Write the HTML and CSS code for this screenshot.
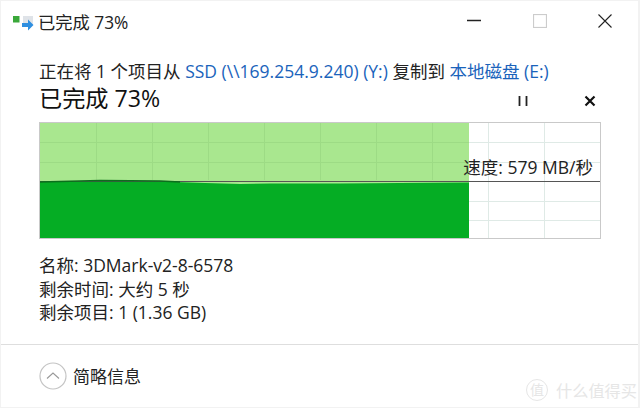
FILE: index.html
```html
<!DOCTYPE html>
<html lang="zh-CN">
<head>
    <title>已完成 73%</title>
    <link rel="stylesheet" href="styles.css">
</head>
<body>
    <div class="window">
        <div class="titlebar">
            <svg class="app-icon" width="26" height="22" viewBox="0 0 26 22">
                <rect x="1" y="6" width="6.500" height="6.500" fill="#3aa83a"/>
                <rect x="11" y="6" width="10" height="9" fill="#dfe3e8"/>
                <path d="M10 13h6V9.500l5.500 5.500-5.500 5.500V17h-6z" fill="#2f8fe0"/>
            </svg>
            <span class="title-text">已完成 73%</span>
            <div class="window-buttons">
                <svg width="14" height="14" viewBox="0 0 14 14"><path d="M0 6.500h14" stroke="#222" stroke-width="1.500"/></svg>
                <svg width="14" height="14" viewBox="0 0 14 14"><rect x="0.500" y="0.500" width="13" height="13" fill="none" stroke="#ccc" stroke-width="1.200"/></svg>
                <svg width="14" height="14" viewBox="0 0 14 14"><path d="M0.500 0.500l13 13M13.500 0.500l-13 13" stroke="#222" stroke-width="1.100"/></svg>
            </div>
        </div>

        <div class="content">
            <p class="copy-line">正在将 1 个项目从 <span class="link">SSD (\\169.254.9.240) (Y:)</span> 复制到 <span class="link">本地磁盘 (E:)</span></p>
            <div class="status-row">
                <h1>已完成 73%</h1>
                <div class="status-buttons">
                    <svg width="12" height="12" viewBox="0 0 12 12"><path d="M2.500 1v10M9.500 1v10" stroke="#222" stroke-width="1.800"/></svg>
                    <svg width="12" height="12" viewBox="0 0 12 12"><path d="M1.500 1.500l9 9M10.500 1.500l-9 9" stroke="#111" stroke-width="2.200"/></svg>
                </div>
            </div>

            <div class="chart">
                <svg width="560" height="115" viewBox="0 0 560 115">
                    <rect x="0" y="0" width="429" height="115" fill="#a9e78f"/>
                    <g stroke="#dfeae6" stroke-width="1">
                        <path d="M448.500 0v115M504.500 0v115"/>
                        <path d="M429 19.500h131M429 39.500h131M429 78.500h131M429 97.500h131"/>
                    </g>
                    <g stroke="#9ddb85" stroke-width="1">
                        <path d="M56.500 0v57M112.500 0v57M168.500 0v57M224.500 0v57M280.500 0v57M336.500 0v57M392.500 0v57"/>
                        <path d="M0 19.500h429M0 39.500h429"/>
                    </g>
                    <path d="M0 59 L60 58 L120 58.500 L165 60 L200 61 L230 60.500 L300 60.500 L360 60 L429 59.500 V115 H0 Z" fill="#05ad24"/>
                    <path d="M0 58.500H560" stroke="#555" stroke-width="1.200"/>
                    <path d="M0 59 L60 57.500 L120 58 L140 59" stroke="#0b6f1c" stroke-width="1.500" fill="none"/>
                </svg>
                <span class="speed">速度: 579 MB/秒</span>
            </div>

            <div class="details">
                <div>名称: 3DMark-v2-8-6578</div>
                <div>剩余时间: 大约 5 秒</div>
                <div>剩余项目: 1 (1.36 GB)</div>
            </div>
        </div>

        <div class="footer">
            <svg width="28" height="28" viewBox="0 0 28 28">
                <circle cx="14" cy="14" r="13" fill="none" stroke="#c4c4c4" stroke-width="1.200"/>
                <path d="M8 16.500l6-5.500 6 5.500" fill="none" stroke="#999" stroke-width="1.100"/>
            </svg>
            <span class="footer-text">简略信息</span>
        </div>

        <div class="watermark"><span class="watermark-logo">值</span><span>什么值得买</span></div>
    </div>
</body>
</html>
```

FILE: styles.css
```css
html, body {
    margin: 0;
    padding: 0;
}

body {
    width: 640px;
    height: 408px;
    overflow: hidden;
    background-color: #f2f2f2;
    font-family: "Open Sans", "Noto Sans CJK SC", sans-serif;
    color: #222;
}

.window {
    position: relative;
    box-sizing: border-box;
    width: 637px;
    height: 406px;
    margin-left: 1px;
    margin-top: 1px;
    background-color: #fff;
    display: flex;
    flex-direction: column;
}

.titlebar {
    height: 40px;
    display: flex;
    align-items: center;
    padding-left: 11px;
    flex-shrink: 0;
}

.title-text {
    font-size: 17.300px;
}

.window-buttons {
    margin-left: auto;
    margin-right: 26px;
    display: flex;
    gap: 51.500px;
    align-items: center;
}

.content {
    padding: 20px 36px 0 38px;
    flex: 1;
}

.copy-line {
    margin: 0;
    font-size: 17.500px;
    line-height: 20px;
    white-space: nowrap;
}

.link {
    color: #1a63bb;
}

.status-row {
    display: flex;
    align-items: center;
    height: 32px;
}

h1 {
    margin: 0;
    font-size: 23.200px;
    font-weight: normal;
    color: #111;
}

.status-buttons {
    margin-left: auto;
    margin-right: 6px;
    margin-top: 8px;
    display: flex;
    gap: 55px;
}

.chart {
    position: relative;
    width: 560px;
    height: 115px;
    margin-top: 9px;
    border: 1px solid #c9c9c9;
}

.chart svg {
    display: block;
}

.speed {
    position: absolute;
    right: 7px;
    top: 33px;
    font-size: 17.500px;
    line-height: 22px;
    color: #222;
    white-space: nowrap;
}

.details {
    margin-top: 15px;
    font-size: 17.500px;
    line-height: 23.500px;
}

.footer {
    height: 62px;
    border-top: 1px solid #dedede;
    display: flex;
    align-items: center;
    padding-left: 38px;
    gap: 6px;
    flex-shrink: 0;
}

.footer-text {
    font-size: 17px;
    margin-top: -2px;
}

.watermark {
    position: absolute;
    right: 1px;
    bottom: 5px;
    display: flex;
    align-items: center;
    gap: 8px;
    font-size: 16.200px;
    color: #e6e6e6;
}

.watermark-logo {
    width: 20px;
    height: 20px;
    border: 1px solid #e6e6e6;
    border-radius: 50%;
    font-size: 14px;
    line-height: 20px;
    text-align: center;
}
```
